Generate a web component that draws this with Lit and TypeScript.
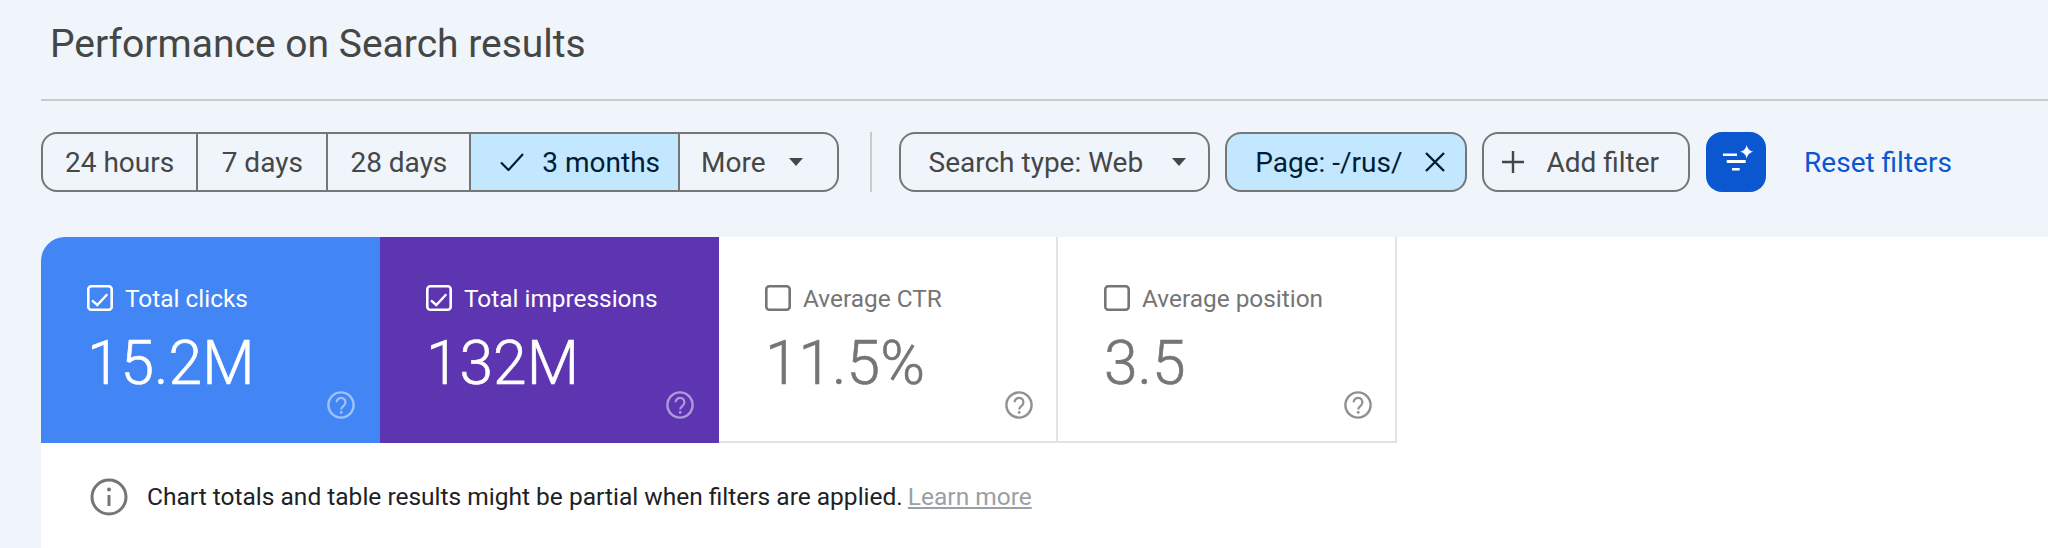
import { LitElement, html, svg, css } from 'lit';
import { customElement } from 'lit/decorators.js';

const CARDS = [
  { label: 'Total clicks', value: '15.2M', tone: 'blue', checked: true },
  { label: 'Total impressions', value: '132M', tone: 'purple', checked: true },
  { label: 'Average CTR', value: '11.5%', tone: 'plain', checked: false },
  { label: 'Average position', value: '3.5', tone: 'plain', checked: false },
];

const caret = html`<svg class="caret" width="14" height="8" viewBox="0 0 14 8"><path d="M0 0h14L7 8z" fill="currentColor"/></svg>`;

@customElement('app-root')
export class AppRoot extends LitElement {
  static styles = css`
    :host {
      display: block;
      width: 2048px;
      height: 548px;
      overflow: hidden;
      background: #f0f4fb;
      font-family: Roboto, sans-serif;
      color: #444746;
    }

    .header {
      margin-left: 41px;
      height: 99px;
      padding-left: 9px;
      border-bottom: 2px solid #c8cbcb;
    }

    .title {
      margin: 0;
      font-size: 39px;
      font-weight: 400;
      line-height: 88px;
    }

    .toolbar {
      display: flex;
      align-items: stretch;
      height: 60px;
      margin: 31px 0 45px 41px;
      font-size: 28px;
    }

    .segments {
      display: flex;
      border: 2px solid #747775;
      border-radius: 16px;
      overflow: hidden;
    }

    .seg {
      display: flex;
      align-items: center;
      padding: 0 22px;
      border-left: 2px solid #747775;
    }

    .seg:first-child {
      border-left: 0;
    }

    .seg.wide {
      padding: 0 23.5px;
    }

    .seg.on {
      padding: 0 18px 0 29px;
      background: #c2e7ff;
      color: #001d35;
    }

    .seg.on svg {
      margin-right: 18px;
    }

    .seg.more {
      padding: 0 34px 0 21px;
    }

    .caret {
      margin-left: 23px;
    }

    .rule {
      width: 2px;
      margin: 0 27px 0 31px;
      background: #c8cbcb;
    }

    .chip {
      display: flex;
      align-items: center;
      margin-right: 15px;
      border: 2px solid #747775;
      border-radius: 16px;
    }

    .chip.type {
      padding: 0 22px 0 28px;
    }

    .chip.type .caret {
      margin-left: 29px;
    }

    .chip.page {
      padding: 0 20px 0 28px;
      background: #c2e7ff;
      color: #001d35;
    }

    .chip.page svg {
      margin-left: 23px;
    }

    .chip.add {
      margin-right: 16px;
      padding: 0 29px 0 17px;
    }

    .chip.add svg {
      margin-right: 21px;
    }

    .ai {
      width: 60px;
      border-radius: 16px;
      background: #0b57d0;
    }

    .ai svg {
      display: block;
    }

    .reset {
      align-self: center;
      margin-left: 38px;
      color: #0b57d0;
    }

    .panel {
      margin-left: 41px;
      height: 311px;
      background: #fff;
      border-top-left-radius: 24px;
    }

    .cards {
      display: flex;
    }

    .card {
      display: flex;
      flex-direction: column;
      width: 339px;
      height: 206px;
      padding: 47px 25px 0 46px;
      box-sizing: border-box;
    }

    .card.blue {
      background: #4285f4;
      color: #fff;
      border-top-left-radius: 24px;
    }

    .card.purple {
      background: #5e35b1;
      color: #fff;
    }

    .card.plain {
      padding-right: 23px;
      color: #757575;
      border-right: 2px solid #e3e3e3;
      border-bottom: 2px solid #e3e3e3;
    }

    .label {
      display: flex;
      align-items: center;
      gap: 12px;
      height: 28px;
      font-size: 24.4px;
    }

    .value {
      margin-top: 17px;
      font-size: 60.5px;
      font-weight: 300;
      -webkit-text-stroke: 0.6px currentColor;
      line-height: 70px;
    }

    .help {
      align-self: flex-end;
      margin-top: -8px;
    }

    .blue .help,
    .purple .help {
      opacity: 0.5;
    }

    .plain .help {
      opacity: 0.8;
    }

    .note {
      display: flex;
      align-items: center;
      height: 107px;
      padding-left: 49px;
      font-size: 24.5px;
      color: #202124;
    }

    .note svg {
      margin-right: 19px;
    }

    .learn {
      margin-left: 5px;
      color: #9aa0a6;
      text-decoration: underline;
    }
  `;

  private checkbox(checked: boolean) {
    return html`<svg width="26" height="26" viewBox="0 0 26 26" fill="none" stroke="currentColor">
      <rect x="1.3" y="1.3" width="23.4" height="23.4" rx="3" stroke-width="2.6"/>
      ${checked ? svg`<path d="M5 15.3l5.3 4.7L20.3 9.3" stroke-width="2.4"/>` : ''}
    </svg>`;
  }

  private help() {
    return html`<svg class="help" width="28" height="28" viewBox="0 0 28 28" fill="none" stroke="currentColor">
      <circle cx="14" cy="14" r="12.6" stroke-width="2.4"/>
      <path d="M9.6 11.2a4.4 4.4 0 1 1 7 3.6c-1.6 1.2-2.4 1.9-2.4 3.6" stroke-width="2.2"/>
      <circle cx="14.2" cy="21.4" r="1.4" fill="currentColor" stroke="none"/>
    </svg>`;
  }

  render() {
    return html`
      <div class="header"><h1 class="title">Performance on Search results</h1></div>
      <div class="toolbar">
        <div class="segments">
          <div class="seg">24 hours</div>
          <div class="seg wide">7 days</div>
          <div class="seg">28 days</div>
          <div class="seg on">
            <svg width="24" height="18" viewBox="0 0 24 18" fill="none" stroke="currentColor" stroke-width="2.2"><path d="M1 9.5l7.5 7.5L23 1"/></svg>
            3 months
          </div>
          <div class="seg more">More ${caret}</div>
        </div>
        <div class="rule"></div>
        <div class="chip type">Search type: Web ${caret}</div>
        <div class="chip page">
          Page: -/rus/
          <svg width="20" height="20" viewBox="0 0 20 20" fill="none" stroke="currentColor" stroke-width="2.4"><path d="M1 1l18 18M19 1L1 19"/></svg>
        </div>
        <div class="chip add">
          <svg width="24" height="24" viewBox="0 0 24 24" fill="none" stroke="currentColor" stroke-width="2.4"><path d="M12 1v22M1 12h22"/></svg>
          Add filter
        </div>
        <div class="ai">
          <svg width="60" height="60" viewBox="0 0 60 60" fill="#fff">
            <path d="M17 21.5h14V24H17zM20.7 28h19v3h-19zM26 36h7.7v2.5H26z"/>
            <path d="M40.7 12.7c.8 4.2 2.8 6.2 7 7-4.2.8-6.2 2.8-7 7-.8-4.2-2.8-6.2-7-7 4.2-.8 6.2-2.8 7-7z"/>
          </svg>
        </div>
        <div class="reset">Reset filters</div>
      </div>
      <div class="panel">
        <div class="cards">
          ${CARDS.map(
            (c) => html`<div class="card ${c.tone}">
              <div class="label">${this.checkbox(c.checked)}<span>${c.label}</span></div>
              <div class="value">${c.value}</div>
              ${this.help()}
            </div>`
          )}
        </div>
        <div class="note">
          <svg width="38" height="38" viewBox="0 0 38 38" fill="none" stroke="#757575" stroke-width="3">
            <circle cx="19" cy="19" r="17"/>
            <path d="M19 17v11" />
            <circle cx="19" cy="11.5" r="2" fill="#757575" stroke="none"/>
          </svg>
          <span>Chart totals and table results might be partial when filters are applied.</span>
          <span class="learn">Learn more</span>
        </div>
      </div>
    `;
  }
}
